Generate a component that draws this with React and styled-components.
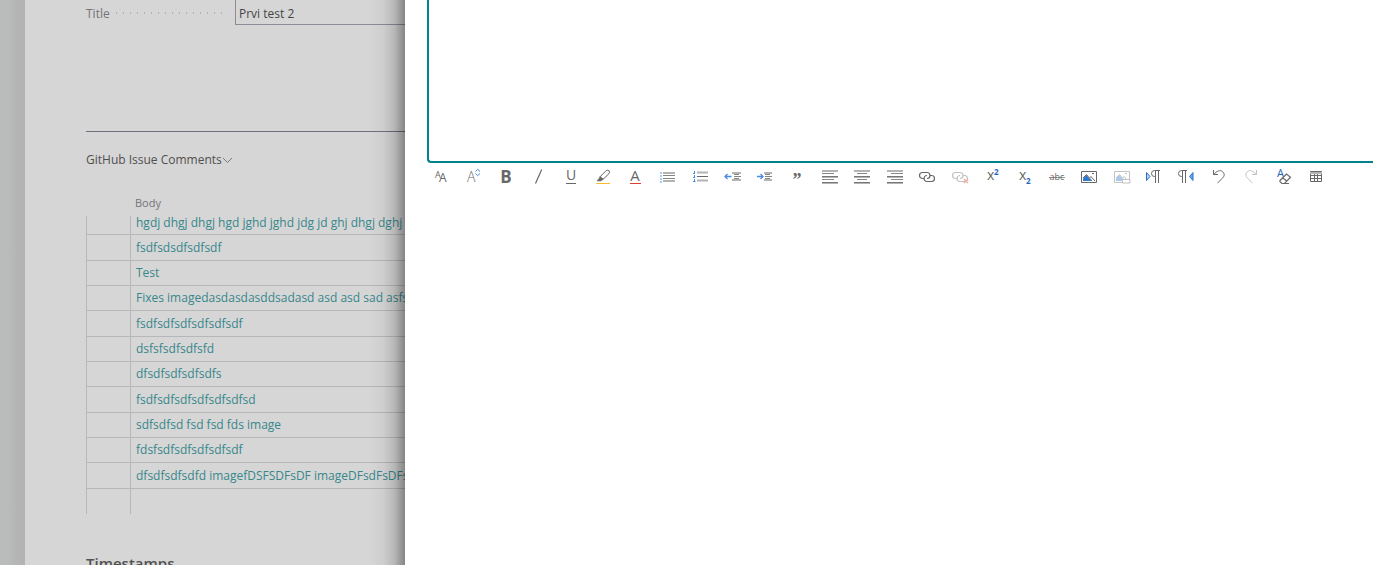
import React from "react";
import styled, { createGlobalStyle, css } from "styled-components";

const GlobalStyle = createGlobalStyle`
  *, *::before, *::after { box-sizing: border-box; }
  body {
    margin: 0;
    background: #ffffff;
    font-family: "Open Sans", "Noto Sans", sans-serif;
    font-size: 12px;
    color: #505050;
  }
`;

const Shell = styled.div`
  display: flex;
  height: 100vh;
  overflow: hidden;
`;

const Gutter = styled.div`
  flex: 0 0 25px;
  background: linear-gradient(to right, #babcbb 0 8px, #b5b6b6 15px, #b2b2b2);
`;

const Card = styled.main`
  flex: 0 0 380px;
  min-width: 0;
  padding-left: 61px;
  overflow: hidden;
  background: #d6d6d6;
`;

const FieldRow = styled.div`
  display: flex;
  height: 132px;
  align-items: flex-start;
  border-bottom: 1px solid #70707c;
`;

const FieldLabel = styled.label`
  display: flex;
  flex: 0 0 149px;
  align-items: center;
  gap: 6px;
  height: 26px;
  padding-right: 10px;
  color: #74747a;
`;

const Leader = styled.span`
  flex: 1;
  height: 2px;
  background: repeating-linear-gradient(to right, #b0b0b3 0 1px, transparent 1px 7px);
`;

const TextField = styled.input`
  flex: 1;
  min-width: 0;
  height: 25px;
  padding: 2px 3px 0;
  border: 1px solid #8c8c96;
  border-width: 0 0 1px 1px;
  background: transparent;
  color: #454545;
  font: inherit;
  outline: none;
`;

const PartHeading = styled.h2`
  margin: 0;
  padding: 19px 0 21px;
  font-size: 12px;
  font-weight: 400;
  line-height: 18px;
`;

const PartToggle = styled.button`
  display: flex;
  align-items: center;
  padding: 0;
  border: 0;
  background: none;
  color: inherit;
  font: inherit;
`;

const CommentTable = styled.table`
  width: 100%;
  border-collapse: separate;
  border-spacing: 0;
  table-layout: fixed;
`;

const HeadCell = styled.th`
  width: ${(p) => (p.$selector ? "44px" : "auto")};
  height: 26px;
  padding: 0 0 0 5px;
  color: #74747a;
  font-size: 11px;
  font-weight: 400;
  line-height: 16px;
  text-align: left;
`;

const Row = styled.tr`
  height: 25px;
  line-height: 16px;

  &:nth-child(3n + 2) {
    height: 26px;
  }

  &:first-child {
    height: 19px;
    line-height: 14px;
    vertical-align: top;
  }
`;

const Cell = styled.td`
  padding: 0 0 0 5px;
  overflow: hidden;
  border-left: 1px solid #b7b7ba;
  border-bottom: ${(p) => (p.$open ? "0" : "1px solid #b7b7ba")};
  white-space: nowrap;
`;

const CommentLink = styled.a`
  color: #37878c;
  text-decoration: none;
`;

const SectionTitle = styled.h2`
  margin: 38px 0 0;
  color: #505050;
  font-size: 15px;
  font-weight: 600;
  line-height: 22px;
`;

const Drawer = styled.section`
  position: relative;
  flex: 1;
  min-width: 0;
  padding-left: 20px;
  background: #ffffff;

  &::before {
    content: "";
    position: absolute;
    top: 0;
    right: 100%;
    bottom: 0;
    width: 36px;
    background: linear-gradient(
      to right,
      rgba(0, 0, 0, 0),
      rgba(0, 0, 0, 0.04) 40%,
      rgba(0, 0, 0, 0.14) 70%,
      rgba(0, 0, 0, 0.38)
    );
    pointer-events: none;
  }
`;

const Editor = styled.textarea`
  display: block;
  width: calc(100% - 2px);
  height: 163px;
  margin-left: 2px;
  padding: 8px;
  border: 2px solid #00838a;
  border-width: 0 0 2px 2px;
  border-radius: 0 0 0 4px;
  font: inherit;
  outline: none;
  resize: none;
`;

const Toolbar = styled.div`
  display: flex;
  justify-content: space-between;
  max-width: 907px;
`;

const ToolButton = styled.button`
  display: flex;
  flex: 0 1 32px;
  align-items: center;
  justify-content: center;
  min-width: 20px;
  height: 28px;
  padding: 0;
  border: 0;
  background: none;
  ${(p) =>
    p.disabled &&
    css`
      opacity: 0.4;
    `}
`;

const Glyph = styled.svg`
  display: block;
  flex: none;
  fill: none;
  stroke: #686868;
  stroke-width: 1;

  text {
    fill: #686868;
    stroke: none;
    font-family: "Open Sans", sans-serif;
  }

  .quote { font-family: "Liberation Serif", serif; }
  .accent { fill: #2463bd; }
  .blue { stroke: #4a8ae0; }
  .pale { stroke: #86b4ee; stroke-width: 2; }
  .soft { stroke: #b4b4b4; stroke-width: 2; }
  .solid { fill: #686868; }
`;

const Icon = ({ children }) => (
  <Glyph width="20" height="20" viewBox="0 0 20 20" aria-hidden="true">
    {children}
  </Glyph>
);

const chain = (
  <>
    <path d="M7 11.5H5.5A3 3 0 0 1 5.5 5.5H10A3 3 0 0 1 10 11.5" strokeWidth="1.2" />
    <path d="M13 8.5H14.5A3 3 0 0 1 14.5 14.5H10A3 3 0 0 1 10 8.5" strokeWidth="1.2" />
  </>
);

const picture = (
  <>
    <path d="M2.5 4.5H17.5V15.5H2.5Z" />
    <path d="M4 14V11.5L7.5 8L12.5 14Z" fill="#2f78d0" stroke="none" />
    <path d="M4 11L7.5 7.5L13 14M10.5 11L12 9.5L16 14" />
    <path d="M13 6.5H15" />
  </>
);

const tools = [
  ["Font", <><text x="4" y="11" fontSize="9">A</text><text x="8" y="15" fontSize="12">A</text></>],
  ["Font size", <><text x="4" y="15" fontSize="14" fontWeight="300">A</text><path className="blue" d="M12.5 4.5L14.7 2.3L17 4.5M12.5 6.5L14.7 8.7L17 6.5" /></>],
  ["Bold", <text x="10" y="16" fontSize="17" fontWeight="700" textAnchor="middle">B</text>],
  ["Italic", <path d="M13.7 2.5L7.5 16.5" strokeWidth="1.2" />],
  ["Underline", <><text x="10" y="13" fontSize="14" textAnchor="middle">U</text><path d="M5 16.5H15" /></>],
  ["Highlight", <><path d="M7 9.8L13.2 3.6Q14.7 2.6 16 3.8Q17.2 5.2 16 6.6L10 12.4M7 9.8L10 12.4" /><path className="solid" d="M7 9.5L6 11.5L4 14H8L10.3 12.3Z" strokeWidth="0.5" /><path d="M3 16.5H17" stroke="#f5bd2e" /></>],
  ["Font color", <><text x="10" y="14" fontSize="15" textAnchor="middle">A</text><path d="M5 16.5H16" stroke="#d9402f" /></>],
  ["Bulleted list", <><path className="soft" d="M5 6H17M5 14H17" /><path d="M5 8.5H17M5 11.5H17" strokeOpacity="0.8" /><path className="pale" d="M2 6H4M2 9H4M2 12H4M2 15H4" strokeDasharray="2" strokeOpacity="0.7" /></>],
  ["Numbered list", <><path className="soft" d="M7 5.5H18M7 13.5H18" /><path d="M7 9.5H18" /><path className="blue" d="M4.5 4V7M4.5 8V11M4.5 12V15M3 6.5H5M3 10.5H5M3 14.5H5.5" /></>],
  ["Decrease indent", <><path className="blue" d="M2 9.5H8.5M4.5 7L2 9.5L4.5 12" strokeWidth="1.3" /><path className="soft" d="M9 6H18M9 13H18" /><path d="M11 7.5H16M11 9.5H18M11 11.5H16" strokeOpacity="0.8" /></>],
  ["Increase indent", <><path className="blue" d="M2 9.5H8M5.5 7L8 9.5L5.5 12" strokeWidth="1.3" /><path className="soft" d="M9 6H17M9 13H17" /><path d="M10 7.5H15M10 9.5H17M10 11.5H15" strokeOpacity="0.8" /></>],
  ["Quote", <text className="quote" x="10" y="19" fontSize="18" fontWeight="700" textAnchor="middle">”</text>],
  ["Align left", <><path d="M2 4H18M2 10H18M2 16H18" className="soft" /><path d="M2 6.5H14M2 9.5H18M2 12.5H14M2 15.5H18" strokeOpacity="0.8" /></>],
  ["Align center", <><path d="M2 4H18M2 10H18M2 16H18" className="soft" /><path d="M5 6.5H15M2 9.5H18M5 12.5H15M2 15.5H18" strokeOpacity="0.8" /></>],
  ["Align right", <><path d="M2 4H18M2 10H18M2 16H18" className="soft" /><path d="M6 6.5H18M2 9.5H18M6 12.5H18M2 15.5H18" strokeOpacity="0.8" /></>],
  ["Insert link", chain],
  ["Remove link", <>{chain}<path d="M14 12L18 16M18 12L14 16" stroke="#e03c28" strokeWidth="1.5" /></>, true],
  ["Superscript", <><text x="5" y="13" fontSize="14">x</text><text className="accent" x="12" y="8" fontSize="8" fontWeight="700">2</text></>],
  ["Subscript", <><text x="5" y="13" fontSize="14">x</text><text className="accent" x="12" y="17" fontSize="8" fontWeight="700">2</text></>],
  ["Strikethrough", <><text x="10" y="13" fontSize="9" textAnchor="middle">abc</text><path d="M2 10.5H18" strokeOpacity="0.7" /></>],
  ["Insert picture", picture],
  ["Picture options", <>{picture}<path d="M10.5 12.5H18V16H10.5Z" fill="#ffffff" /></>, true],
  ["Left to right", <><path d="M2.5 5.5L6 9.5L2.5 13.5Z" fill="#b9d4f5" stroke="#2f6fc4" /><path d="M16 3.5H10.5A3 3 0 0 0 10.5 9.5H11.5M11.5 3.5V16M14.5 3.5V16" /></>],
  ["Right to left", <><path d="M17 5.5L13.5 9.5L17 13.5Z" fill="#6ba3e6" stroke="#2f6fc4" /><path d="M11 3.5H5.5A3 3 0 0 0 5.5 9.5H6.5M6.5 3.5V16M9.5 3.5V16" /></>],
  ["Undo", <path d="M4.5 3V7.5H9M4.5 7.5C8 4 11 2.6 13.3 4.5C16 6.5 15.5 9.1 13.6 11L8.5 16" />],
  ["Redo", <path d="M15.5 3V7.5H11M15.5 7.5C12 4 9 2.6 6.7 4.5C4 6.5 4.5 9.1 6.4 11L11.5 16" />, true],
  ["Clear formatting", <><text className="accent" x="3" y="10" fontSize="11">A</text><path d="M6 13.5L12.5 7L16.5 10.2L10.5 16.5H8L6 14.8ZM8.5 10.8L12.8 14" strokeWidth="1.2" /><path d="M11 16.5H15" /></>],
  ["Table", <><path d="M4.5 4.5H15.5V14.5H4.5ZM4.5 8.5H15.5M4.5 11.5H15.5M8.5 7V14.5M11.5 7V14.5" /><path d="M4 6H16" className="soft" /></>],
];

const comments = [
  "hgdj dhgj dhgj hgd jghd jghd jdg jd ghj dhgj dghj",
  "fsdfsdsdfsdfsdf",
  "Test",
  "Fixes imagedasdasdasddsadasd asd asd sad asfs",
  "fsdfsdfsdfsdfsdfsdf",
  "dsfsfsdfsdfsfd",
  "dfsdfsdfsdfsdfs",
  "fsdfsdfsdfsdfsdfsdfsd",
  "sdfsdfsd fsd fsd fds image",
  "fdsfsdfsdfsdfsdfsdf",
  "dfsdfsdfsdfd imagefDSFSDFsDF imageDFsdFsDFs",
];

export default function App() {
  return (
    <Shell>
      <GlobalStyle />
      <Gutter />
      <Card>
        <FieldRow>
          <FieldLabel htmlFor="title">
            Title
            <Leader />
          </FieldLabel>
          <TextField id="title" defaultValue="Prvi test 2" />
        </FieldRow>
        <PartHeading>
          <PartToggle type="button">
            GitHub Issue Comments
            <svg width="10" height="10" viewBox="0 0 10 10" fill="none" stroke="#777" aria-hidden="true">
              <path d="M1 3L5.5 7.5L10 3" />
            </svg>
          </PartToggle>
        </PartHeading>
        <CommentTable>
          <thead>
            <tr>
              <HeadCell $selector aria-label="Select" />
              <HeadCell>Body</HeadCell>
            </tr>
          </thead>
          <tbody>
            {comments.map((text) => (
              <Row key={text}>
                <Cell />
                <Cell>
                  <CommentLink href="#comment">{text}</CommentLink>
                </Cell>
              </Row>
            ))}
            <Row>
              <Cell $open />
              <Cell $open />
            </Row>
          </tbody>
        </CommentTable>
        <SectionTitle>Timestamps</SectionTitle>
      </Card>
      <Drawer>
        <Editor aria-label="Comment body" />
        <Toolbar role="toolbar" aria-label="Formatting">
          {tools.map(([name, drawing, disabled]) => (
            <ToolButton key={name} type="button" aria-label={name} disabled={disabled}>
              <Icon>{drawing}</Icon>
            </ToolButton>
          ))}
        </Toolbar>
      </Drawer>
    </Shell>
  );
}
